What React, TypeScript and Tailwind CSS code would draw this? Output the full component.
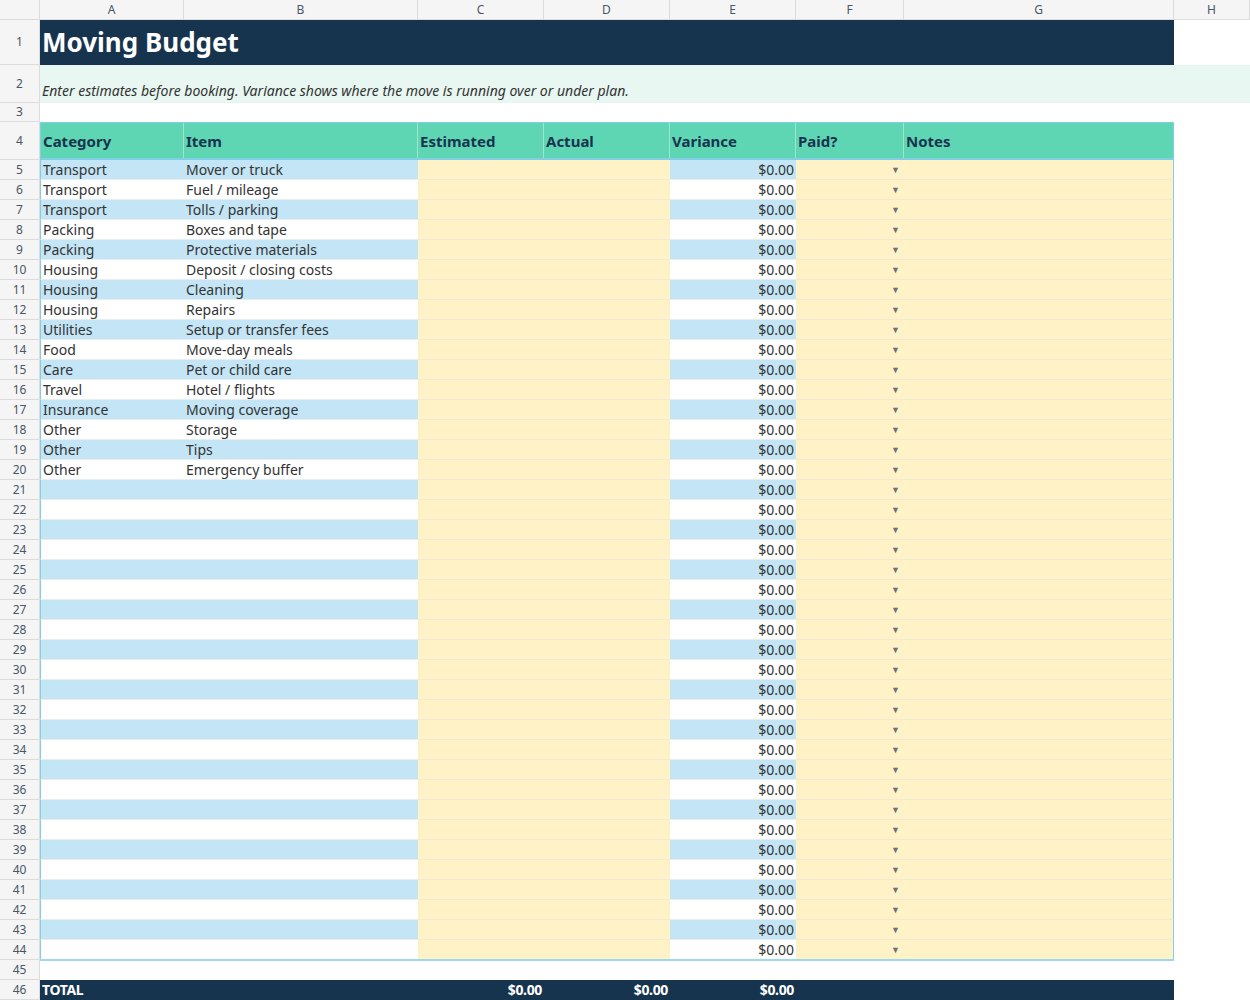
const cols = [144, 234, 126, 126, 126, 108, 270, 76];
const letters = ["A", "B", "C", "D", "E", "F", "G", "H"];

const data: [string, string][] = [
  ["Transport", "Mover or truck"],
  ["Transport", "Fuel / mileage"],
  ["Transport", "Tolls / parking"],
  ["Packing", "Boxes and tape"],
  ["Packing", "Protective materials"],
  ["Housing", "Deposit / closing costs"],
  ["Housing", "Cleaning"],
  ["Housing", "Repairs"],
  ["Utilities", "Setup or transfer fees"],
  ["Food", "Move-day meals"],
  ["Care", "Pet or child care"],
  ["Travel", "Hotel / flights"],
  ["Insurance", "Moving coverage"],
  ["Other", "Storage"],
  ["Other", "Tips"],
  ["Other", "Emergency buffer"],
];

function RowNum({ n, h }: { n: number | string; h: string }) {
  return (
    <div className={`${h} w-[40px] shrink-0 flex items-center justify-center text-[12px] text-gray-600 bg-[#f5f5f5] border-r border-b border-[#dcdcdc]`}>
      {n}
    </div>
  );
}

export default function App() {
  const rows = [];
  for (let i = 0; i < 40; i++) {
    const d = data[i] || ["", ""];
    const stripe = i % 2 === 0 ? "bg-[#c3e5f5]" : "bg-white";
    rows.push(
      <div key={i} className="flex h-[20px]">
        <RowNum n={i + 5} h="h-[20px]" />
        <div className={`w-[144px] ${stripe} border-l border-[#7fcfe6] border-b border-b-[#e8eef0] pl-[2px] leading-[20px] truncate`}>{d[0]}</div>
        <div className={`w-[234px] ${stripe} border-b border-[#e8eef0] pl-[2px] leading-[20px] truncate`}>{d[1]}</div>
        <div className="w-[252px] bg-[#fff2c6] border-b border-[#efe9d6]" />
        <div className={`w-[126px] ${stripe} border-b border-[#e8eef0] pr-[2px] text-right leading-[20px]`}>$0.00</div>
        <div className="w-[108px] bg-[#fff2c6] border-b border-[#efe9d6] flex items-center justify-end pr-[4px]">
          <span className="text-[9px] text-gray-500">▼</span>
        </div>
        <div className="w-[270px] bg-[#fff2c6] border-b border-[#efe9d6] border-r border-r-[#7fcfe6]" />
      </div>
    );
  }

  return (
    <div className="w-[1250px] h-[1000px] overflow-hidden bg-white text-[14px] text-[#333] font-['Liberation_Sans',Arial,sans-serif]">
      <div className="flex h-[20px]">
        <div className="w-[40px] bg-[#f5f5f5] border-r border-b border-[#dcdcdc]" />
        {cols.map((w, i) => (
          <div key={i} style={{ width: w }} className="bg-[#f5f5f5] border-r border-b border-[#dcdcdc] flex items-center justify-center text-[12px] text-gray-600">
            {letters[i]}
          </div>
        ))}
      </div>
      <div className="flex h-[45px]">
        <RowNum n={1} h="h-[45px]" />
        <div className="w-[1134px] bg-[#17344f] text-white text-[26px] font-bold pl-[2px] flex items-center">Moving Budget</div>
      </div>
      <div className="flex h-[38px]">
        <RowNum n={2} h="h-[38px]" />
        <div className="w-[1210px] bg-[#e8f7f1] italic pl-[2px] flex items-end pb-[2px]">
          Enter estimates before booking. Variance shows where the move is running over or under plan.
        </div>
      </div>
      <div className="flex h-[19px]">
        <RowNum n={3} h="h-[19px]" />
      </div>
      <div className="flex h-[38px]">
        <RowNum n={4} h="h-[38px]" />
        <div className="flex w-[1134px] bg-[#5fd6b3] border-t border-x border-[#7fcfe6] border-b-2 border-b-[#7fcfe6] font-bold text-[#17344f] text-[15px]">
          {["Category", "Item", "Estimated", "Actual", "Variance", "Paid?", "Notes"].map((t, i) => (
            <div key={t} style={{ width: cols[i] - (i === 0 || i === 6 ? 1 : 0) }} className={`flex items-end pb-[6px] pl-[2px] ${i < 6 ? "border-r border-[#9fe6cf]" : ""}`}>
              {t}
            </div>
          ))}
        </div>
      </div>
      {rows}
      <div className="flex h-[20px]">
        <RowNum n={45} h="h-[20px]" />
        <div className="w-[1134px] border-t-2 border-[#9fd8ea] -mt-[1px]" />
      </div>
      <div className="flex h-[20px]">
        <RowNum n={46} h="h-[20px]" />
        <div className="flex w-[1134px] bg-[#17344f] text-white font-bold tracking-tight leading-[20px]">
          <div className="w-[378px] pl-[2px]">TOTAL</div>
          <div className="w-[126px] text-right pr-[2px]">$0.00</div>
          <div className="w-[126px] text-right pr-[2px]">$0.00</div>
          <div className="w-[126px] text-right pr-[2px]">$0.00</div>
        </div>
      </div>
    </div>
  );
}
